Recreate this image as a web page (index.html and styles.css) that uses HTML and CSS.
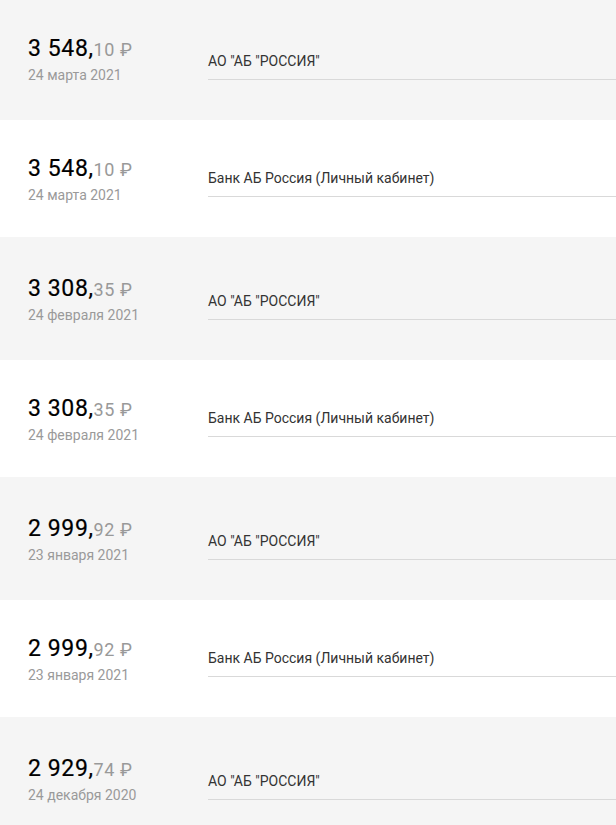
FILE: index.html
```html
<!DOCTYPE html>
<html lang="ru">
<head>
<meta charset="utf-8">
<link rel="stylesheet" href="styles.css">
</head>
<body>
<div class="list">
  <div class="row odd">
    <div class="left"><div class="amount">3 548,<span class="frac">10 ₽</span></div><div class="date">24 марта 2021</div></div>
    <div class="right"><div class="name">АО "АБ "РОССИЯ"</div></div>
  </div>
  <div class="row even">
    <div class="left"><div class="amount">3 548,<span class="frac">10 ₽</span></div><div class="date">24 марта 2021</div></div>
    <div class="right"><div class="name">Банк АБ Россия (Личный кабинет)</div></div>
  </div>
  <div class="row odd">
    <div class="left"><div class="amount">3 308,<span class="frac">35 ₽</span></div><div class="date">24 февраля 2021</div></div>
    <div class="right"><div class="name">АО "АБ "РОССИЯ"</div></div>
  </div>
  <div class="row even">
    <div class="left"><div class="amount">3 308,<span class="frac">35 ₽</span></div><div class="date">24 февраля 2021</div></div>
    <div class="right"><div class="name">Банк АБ Россия (Личный кабинет)</div></div>
  </div>
  <div class="row odd">
    <div class="left"><div class="amount">2 999,<span class="frac">92 ₽</span></div><div class="date">23 января 2021</div></div>
    <div class="right"><div class="name">АО "АБ "РОССИЯ"</div></div>
  </div>
  <div class="row even">
    <div class="left"><div class="amount">2 999,<span class="frac">92 ₽</span></div><div class="date">23 января 2021</div></div>
    <div class="right"><div class="name">Банк АБ Россия (Личный кабинет)</div></div>
  </div>
  <div class="row odd">
    <div class="left"><div class="amount">2 929,<span class="frac">74 ₽</span></div><div class="date">24 декабря 2020</div></div>
    <div class="right"><div class="name">АО "АБ "РОССИЯ"</div></div>
  </div>
</div>
</body>
</html>
```
FILE: styles.css
```css
html, body {
  margin: 0;
  padding: 0;
  background: #fff;
  overflow: hidden;
}
body {
  font-family: Roboto, "Noto Sans", sans-serif;
}
.list {
  margin-top: -3px;
}
.row {
  display: flex;
  align-items: center;
}
.row.odd {
  background: #f5f5f5;
  height: 123px;
}
.row.even {
  background: #fff;
  height: 117px;
}
.left {
  width: 180px;
  padding-left: 28px;
  padding-top: 4px;
  flex: none;
}
.amount {
  font-size: 23px;
  line-height: 26px;
  color: #000;
  letter-spacing: 0.6px;
  -webkit-text-stroke: 0.2px #000;
}
.frac {
  font-size: 18px;
  color: #999;
  letter-spacing: 0.6px;
  -webkit-text-stroke: 0;
}
.date {
  margin-top: 2px;
  font-size: 14px;
  line-height: 20px;
  color: #9a9a9a;
}
.right {
  flex: 1;
  align-self: flex-end;
  margin-bottom: 40px;
  border-bottom: 1px solid #d9d9d9;
  padding-bottom: 8px;
}
.name {
  font-size: 14px;
  line-height: 20px;
  color: #333;
}
```
